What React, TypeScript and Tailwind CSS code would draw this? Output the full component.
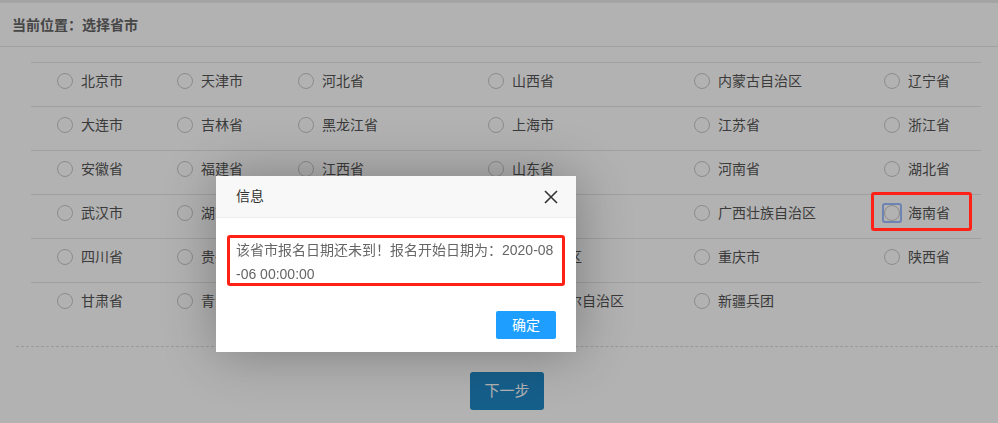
const rows: string[][] = [
  ["北京市", "天津市", "河北省", "山西省", "内蒙古自治区", "辽宁省"],
  ["大连市", "吉林省", "黑龙江省", "上海市", "江苏省", "浙江省"],
  ["安徽省", "福建省", "江西省", "山东省", "河南省", "湖北省"],
  ["武汉市", "湖南省", "广东省", "深圳市", "广西壮族自治区", "海南省"],
  ["四川省", "贵州省", "云南省", "西藏自治区", "重庆市", "陕西省"],
  ["甘肃省", "青海省", "宁夏回族自治区", "新疆维吾尔自治区", "新疆兵团", ""],
];

const font = "font-['Liberation_Sans','Noto_Sans_CJK_SC',sans-serif]";

function Cell({ name, focused }: { name: string; focused?: boolean }) {
  if (!name) return <div />;
  return (
    <div className="relative flex h-[20px] items-center gap-[8px] pl-[26px]">
      <span className="relative flex h-4 w-4 items-center justify-center">
        <span className="h-4 w-4 rounded-full border border-[#c8c8c8]" />
        {focused && (
          <span className="absolute -inset-[2px] rounded-[3px] border-2 border-[#9cbeff]" />
        )}
      </span>
      <span className="text-[14px] leading-none text-[#555]">{name}</span>
      {focused && (
        <span className="absolute left-[13px] top-[-11px] z-30 h-[39px] w-[101px] rounded-[3px] border-[3px] border-[#ff2016]" />
      )}
    </div>
  );
}

export default function App() {
  return (
    <div className={`relative h-[423px] w-[998px] overflow-hidden bg-white ${font}`}>
      <div className="h-[3px] bg-[#ebebeb]" />
      <div className="flex h-[44px] items-center border-b border-[#e5e5e5] pl-3 pt-[2px]">
        <span className="text-[14px] font-bold text-[#666]">当前位置：选择省市</span>
      </div>

      <div className="pl-[16px]">
        <div className="ml-[15px] mr-[17px] mt-[15px]">
          {rows.map((row, i) => (
            <div
              key={i}
              className="grid h-[44px] grid-cols-[120px_121px_190px_206px_190px_1fr] border-t border-[#e5e5e5] pt-[8px]"
            >
              {row.map((name, j) => (
                <Cell key={j} name={name} focused={name === "海南省"} />
              ))}
            </div>
          ))}
        </div>
        <div className="mt-[20px] border-t border-dashed border-[#dcdcdc]" />
        <div className="flex justify-center">
          <button className="mt-[25px] h-[38px] w-[74px] rounded-[3px] bg-[#1f88c8] text-[15px] text-white">
            下一步
          </button>
        </div>
      </div>

      {/* 遮罩 */}
      <div className="fixed inset-0 z-10 bg-black/30" />

      {/* 弹窗 */}
      <div className="absolute left-[216px] top-[176px] z-20 w-[360px] bg-white shadow-[1px_1px_50px_rgba(0,0,0,0.3)]">
        <div className="flex h-[42px] items-center justify-between border-b border-[#eee] bg-[#f8f8f8] pl-[20px] pr-[18px]">
          <span className="text-[14px] text-[#333]">信息</span>
          <svg width="14" height="14" viewBox="0 0 14 14" fill="none" stroke="#333" strokeWidth="1.6">
            <path d="M1 1L13 13M13 1L1 13" />
          </svg>
        </div>
        <div className="relative mx-[20px] my-[20px] text-[14px] leading-[24px] text-[#666]">
          <span className="block">该省市报名日期还未到！报名开始日期为：2020-08</span>
          <span className="block">-06 00:00:00</span>
          <div className="absolute -left-[9px] -right-[9px] -top-[3px] bottom-0 rounded-[3px] border-[3px] border-[#ff2016]" />
        </div>
        <div className="flex justify-end px-[20px] pb-[13px] pt-[5px]">
          <button className="h-[28px] w-[60px] rounded-[2px] bg-[#1e9fff] text-[14px] text-white">确定</button>
        </div>
      </div>
    </div>
  );
}
